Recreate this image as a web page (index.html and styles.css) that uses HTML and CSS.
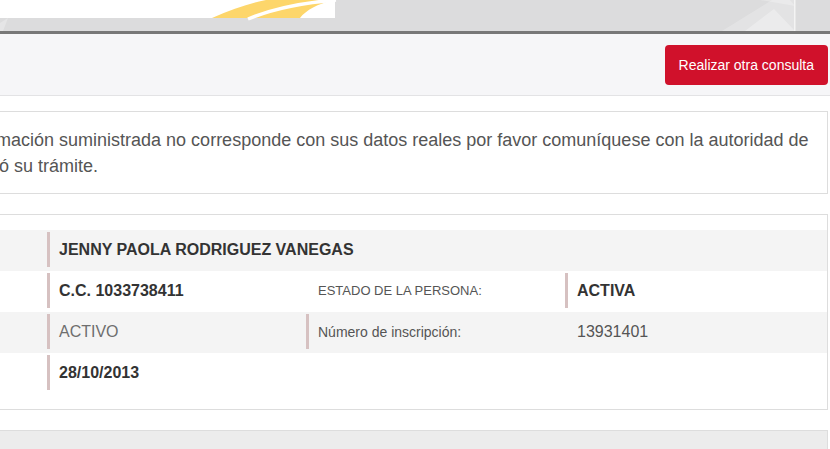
FILE: index.html
```html
<!DOCTYPE html>
<html lang="es">
<head>
<meta charset="utf-8">
<title>Consulta de ciudadanos</title>
<link rel="stylesheet" href="styles.css">
</head>
<body>
<header class="banner">
  <svg class="banner-art" width="830" height="31" viewBox="0 0 830 31" aria-hidden="true">
    <rect x="0" y="0" width="830" height="31" fill="#dcdcdd"/>
    <polygon points="0,31 0,23 8,18 3,31" fill="#e5e5e6"/>
    <rect x="0" y="0" width="335" height="18" fill="#ffffff"/>
    <path d="M212,18 C232,9 250,3 266,0 L333,0 C318,4 306,10 300,18 Z" fill="#fdd66b"/>
    <path d="M248,19 C272,9 300,3 336,0" fill="none" stroke="#ffffff" stroke-width="3.5"/>
    <polygon points="722,31 772,0 795,0 795,31" fill="#ffffff" opacity="0.22"/>
    <polygon points="745,31 774,9 795,31" fill="#ffffff" opacity="0.3"/>
    <polygon points="760,0 790,0 795,6" fill="#ffffff" opacity="0.25"/>
    <rect x="794" y="0" width="1.5" height="31" fill="#f4f4f4"/>
  </svg>
</header>

<div class="toolbar">
  <button class="btn" type="button">Realizar otra consulta</button>
</div>

<main class="content">
  <div class="notice">
    <span class="notice-line">Si la información suministrada no corresponde con sus datos reales por favor comuníquese con la autoridad de</span>
    <span class="notice-line">que realizó su trámite.</span>
  </div>

  <section class="card data">
    <div class="row alt">
      <div class="cell label">NOMBRE COMPLETO:</div>
      <div class="cell value strong bar span3">JENNY PAOLA RODRIGUEZ VANEGAS</div>
    </div>
    <div class="row">
      <div class="cell label">NRO. DOCUMENTO:</div>
      <div class="cell value strong bar">C.C. 1033738411</div>
      <div class="cell label">ESTADO DE LA PERSONA:</div>
      <div class="cell value strong bar">ACTIVA</div>
    </div>
    <div class="row alt">
      <div class="cell label">ESTADO DEL CONDUCTOR:</div>
      <div class="cell value muted bar">ACTIVO</div>
      <div class="cell label label-lg bar">Número de inscripción:</div>
      <div class="cell value plain">13931401</div>
    </div>
    <div class="row">
      <div class="cell label">FECHA DE INSCRIPCIÓN:</div>
      <div class="cell value strong bar">28/10/2013</div>
    </div>
  </section>

  <section class="card panel">
    <h3 class="panel-title">Licencia(s) de conducción</h3>
  </section>
</main>
</body>
</html>
```
FILE: styles.css
```css
html, body {
  margin: 0;
  padding: 0;
  background: #ffffff;
  overflow: hidden;
}

body {
  font-family: "Liberation Sans", Arial, sans-serif;
  color: #333333;
}

.banner {
  height: 31px;
  border-bottom: 3px solid #787878;
}

.banner-art {
  display: block;
}

.toolbar {
  height: 50px;
  background: #f6f6f8;
  border-bottom: 1px solid #e3e3e5;
  display: flex;
  justify-content: flex-end;
  align-items: flex-start;
  padding: 11px 2px 0 0;
}

.btn {
  height: 40px;
  padding: 0 14px;
  border: none;
  border-radius: 4px;
  background: #d0112b;
  color: #ffffff;
  font-family: "Liberation Sans", Arial, sans-serif;
  font-size: 14px;
  line-height: 40px;
  cursor: pointer;
}

.content {
  width: 1056px;
  margin-left: -228px;
  padding-top: 15px;
}

.notice {
  margin-left: 133px;
  border: 1px solid #dddddd;
  padding: 15px 20px 14px 15px;
  font-size: 18px;
  line-height: 26px;
  color: #555555;
}

.notice-line {
  display: block;
  white-space: nowrap;
}

.card {
  border: 1px solid #dddddd;
  margin-top: 20px;
}

.data {
  padding: 15px 0 15px 15px;
}

.row {
  display: grid;
  grid-template-columns: 259px 259px 259px 1fr;
  height: 41px;
}

.row.alt {
  background: #f4f4f4;
}

.cell {
  height: 35px;
  margin-top: 2px;
  border-left: 3px solid transparent;
  padding-left: 9px;
  display: flex;
  align-items: center;
  box-sizing: border-box;
  white-space: nowrap;
}

.cell.bar {
  border-left-color: #d6c1c1;
}

.span3 {
  grid-column: span 3;
}

.label {
  font-size: 13px;
  color: #555555;
}

.label-lg {
  font-size: 14px;
}

.value {
  font-size: 16px;
}

.strong {
  font-weight: bold;
  color: #333333;
}

.muted {
  color: #6e6e6e;
}

.plain {
  color: #555555;
}

.panel {
  background: #ececec;
  height: 60px;
  padding: 13px 0 0 15px;
}

.panel-title {
  margin: 0;
  font-size: 15px;
  font-weight: bold;
  color: #333333;
}
```
